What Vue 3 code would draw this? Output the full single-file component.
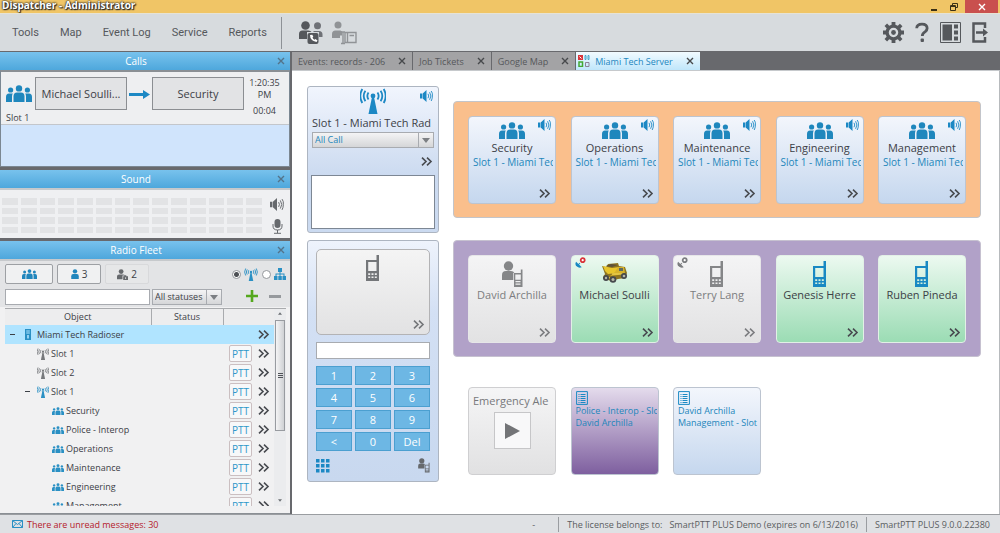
<script setup>
import { ref } from 'vue'

const menu = ['Tools', 'Map', 'Event Log', 'Service', 'Reports']
const tabs = ['Events: records - 206', 'Job Tickets', 'Google Map']
const status = ref('All statuses')
const callType = ref('All Call')
const view = ref('radio')
const search = ref('')
const number = ref('')
const message = ref('')

const tree = [
  { name: 'Miami Tech Radioser', icon: 'server', level: 0, open: true, selected: true },
  { name: 'Slot 1', icon: 'antenna', level: 1, off: true },
  { name: 'Slot 2', icon: 'antenna', level: 1, off: true },
  { name: 'Slot 1', icon: 'antenna', level: 1, open: true },
  { name: 'Security', icon: 'group', level: 2 },
  { name: 'Police - Interop', icon: 'group', level: 2 },
  { name: 'Operations', icon: 'group', level: 2 },
  { name: 'Maintenance', icon: 'group', level: 2 },
  { name: 'Engineering', icon: 'group', level: 2 },
  { name: 'Management', icon: 'group', level: 2 },
]
const groups = ['Security', 'Operations', 'Maintenance', 'Engineering', 'Management']
const radios = [
  { name: 'David Archilla', icon: 'person-radio', state: 'off' },
  { name: 'Michael Soulli', icon: 'truck', state: 'on', gps: 'lost' },
  { name: 'Terry Lang', icon: 'phone', state: 'off', gps: 'off' },
  { name: 'Genesis Herre', icon: 'phone', state: 'on' },
  { name: 'Ruben Pineda', icon: 'phone', state: 'on' },
]
const keys = ['1', '2', '3', '4', '5', '6', '7', '8', '9', '<', '0', 'Del']
</script>

<template>
  <div class="app">
    <svg class="sprite" aria-hidden="true">
      <symbol id="group" viewBox="0 0 26 17">
        <circle cx="13" cy="3.4" r="3.2" /><circle cx="4.6" cy="5" r="2.6" /><circle cx="21.4" cy="5" r="2.6" />
        <path d="M7.500 17v-5.500q0-4 3.500-4h4q3.500 0 3.500 4V17z" />
        <path d="M0 17v-5q0-3.500 3-3.500h3.800q-.8 1.200-.8 3V17zM26 17v-5q0-3.500-3-3.500h-3.800q.8 1.200.8 3V17z" />
      </symbol>
      <symbol id="person" viewBox="0 0 12 16">
        <circle cx="6" cy="3.700" r="3.500" /><path d="M0 16v-4.500Q0 8 3 8h6q3 0 3 3.500V16z" />
      </symbol>
      <symbol id="person-lock" viewBox="0 0 16 16">
        <circle cx="6" cy="3.700" r="3.500" /><path d="M0 15v-4Q0 8 3 8h6q2 0 2.500 1.500H8V15z" />
        <path d="M9 10.500h1.500V9h3v1.500H16V16H9zm3 1.500v2.500h1.200V12z" fill-rule="evenodd" />
      </symbol>
      <symbol id="antenna" viewBox="0 0 26 26">
        <circle cx="13" cy="8" r="2.400" /><path d="M11.800 10h2.400L17.500 26h-9z" />
        <path d="M8.500 4.500q-2.300 3.500 0 7M5.400 2.800q-3.400 5.200 0 10.400M2.300 1q-4 7 0 14M17.500 4.500q2.300 3.500 0 7M20.600 2.800q3.400 5.200 0 10.400M23.700 1q4 7 0 14" fill="none" stroke="currentColor" stroke-width="1.800" />
      </symbol>
      <symbol id="speaker" viewBox="0 0 13 12">
        <path d="M0 3.500h2.200v5H0zM2.700 3.500L6.500 0v12L2.700 8.500z" />
        <path d="M8 3.800q1.500 2.200 0 4.400M9.600 2.200q2.600 3.800 0 7.600M11.200 1q1.600 2 1.200 5-.1 3-1.200 5" fill="none" stroke="currentColor" stroke-width=".9" />
      </symbol>
      <symbol id="more" viewBox="0 0 12 9">
        <path d="M1 .7l4 3.800-4 3.800M6 .7l4 3.800-4 3.800" fill="none" stroke="currentColor" stroke-width="1.600" />
      </symbol>
      <symbol id="close" viewBox="0 0 8 8">
        <path d="M1 1l6 6M7 1L1 7" fill="none" stroke="currentColor" stroke-width="1.400" />
      </symbol>
      <symbol id="server" viewBox="0 0 6 11">
        <path d="M0 0h6v11H0zM1.200 1.500v1h3.600v-1zM1.200 3.600v1h3.600v-1zM2.200 6v3.500h1.600V6z" fill-rule="evenodd" />
      </symbol>
      <symbol id="phone" viewBox="0 0 14 27">
        <path d="M10.500 0H13v26H0V5h10.500zM2.200 7v9h8.300V7zM2.200 18.300v1.600h2v-1.600zm3.300 0v1.600h2v-1.600zm3.300 0v1.600h2v-1.600zM2.200 21.500v1.600h2v-1.600zm3.300 0v1.600h2v-1.600zm3.300 0v1.600h2v-1.600z" fill-rule="evenodd" />
      </symbol>
      <symbol id="person-radio" viewBox="0 0 21 27">
        <circle cx="6.500" cy="5" r="4.700" /><path d="M0 19v-5q0-4 4-4h5q2.500 0 3.300 2h-1v7z" />
        <path d="M18.800 8.500h1.700V26H12V12h6.800zM13.300 13.500v5.200h5.500v-5.200zM13.500 20v1.200h5V20zm0 2.500v1.200h5v-1.200z" fill-rule="evenodd" />
      </symbol>
      <symbol id="truck" viewBox="0 0 25 20">
        <path d="M0 3l4 1 2-3 10-1 1 3 6 1 2 6-2 5-7 1-7 2-8-3 2-4z" fill="#8e7420" />
        <path d="M1 3l9 2 7-1-2 6-9 1-3-3z" fill="#e8c52c" /><path d="M4 3l6 1 6-2-7-1z" fill="#5d523b" />
        <path d="M16 4h6l1 6-7 2-8 1 5-4z" fill="#d6b22a" /><path d="M17 5h4v3h-4z" fill="#5e6a62" />
        <path d="M1 13l7 2M10 11h12" stroke="#f0d75a" />
        <g fill="#45484b"><circle cx="4" cy="15" r="3" /><circle cx="11" cy="16.500" r="3.300" /><circle cx="22" cy="13" r="3" /></g>
        <g fill="#b7b7a7"><circle cx="4" cy="15" r="1.200" /><circle cx="11" cy="16.500" r="1.500" /><circle cx="22" cy="13" r="1.300" /></g>
      </symbol>
      <symbol id="dish" viewBox="0 0 10 10">
        <path d="M1.200 3Q-1 7 3 9q2 1 4.500.3L4.500 6.200 5.800 5 5 4.300 3.800 5.500z" />
      </symbol>
      <symbol id="list" viewBox="0 0 12 14">
        <path d="M.6.600h10.800v12.800H.6zM2.500 3.500h1M4.500 3.500h5M2.500 5.500h1M4.500 5.500h5M2.500 7.500h1M4.500 7.500h5M2.500 9.500h1M4.500 9.500h5M2.500 11.500h1M4.500 11.500h5" fill="none" stroke="currentColor" />
      </symbol>
    </svg>

    <header class="titlebar">
      <h1>Dispatcher - Administrator</h1>
      <div class="window-buttons">
        <button aria-label="Minimize"><svg viewBox="0 0 8 8"><path d="M1 6h6v2H1z" /></svg></button>
        <button aria-label="Restore"><svg viewBox="0 0 8 8"><path d="M2.500 2.500v-2h5v4h-2M.5 2.500h5v5h-5zM.5 3.500h5" fill="none" stroke="currentColor" /></svg></button>
        <button class="quit" aria-label="Close"><svg viewBox="0 0 8 8"><use href="#close" /></svg></button>
      </div>
    </header>

    <div class="toolbar">
      <nav>
        <button v-for="item in menu" :key="item">{{ item }}</button>
      </nav>
      <div class="quick">
        <button aria-label="Group call">
          <svg width="24" height="24" viewBox="0 0 24 24">
            <circle cx="6.500" cy="4.500" r="4.300" /><path d="M0 18v-5q0-3.500 3.500-3.500h6q2 0 3 1.500H8v7z" />
            <circle cx="18.500" cy="4.700" r="3.500" opacity=".8" /><path d="M15 10h5q3.500 0 3.500 3.500V16H20v-5h-6z" opacity=".8" />
            <rect x="8.500" y="12" width="11" height="11" rx="2" />
            <path d="M11 14q0 5.500 6.500 7l1-1.600-2-1.400-1 .8q-1.700-1-2-2.300l.8-.8-1-2z" fill="#fff" />
          </svg>
        </button>
        <button class="faded" aria-label="Log entry">
          <svg width="25" height="24" viewBox="0 0 25 24">
            <circle cx="6" cy="4" r="3.500" /><path d="M0 17v-4q0-3.500 3.500-3.500h5l1.500 1v4H8V17z" />
            <path d="M9 11h4M11 11v11M9 22.500h4M13 11.500h11v10H13zM15.500 11.500v10M17.500 14.500h4.500" fill="none" stroke="currentColor" stroke-width="1.400" />
          </svg>
        </button>
      </div>
      <div class="system">
        <button aria-label="Settings">
          <svg width="21" height="21" viewBox="0 0 22 22">
            <path d="M9 0h4v3l2.500 1 2.200-2.200 2.700 2.700L18.200 6.700l1 2.300H22v4h-2.800l-1 2.500 2.200 2.200-2.700 2.700-2.200-2.200-2.500 1V22H9v-2.800l-2.500-1-2.200 2.200-2.700-2.700 2.200-2.200-1-2.500H0V9h2.800l1-2.500L1.600 4.300l2.700-2.700 2.200 2.200L9 2.800zM11 6a5 5 0 100 10 5 5 0 000-10z" fill-rule="evenodd" /><circle cx="11" cy="11" r="2.500" />
          </svg>
        </button>
        <button aria-label="Help">
          <svg width="14" height="21" viewBox="0 0 15 21">
            <path d="M1.800 6Q2 1.500 7.500 1.500T13 6q0 2-2 3.500-3.200 2-3.200 4.800" fill="none" stroke="currentColor" stroke-width="3" /><rect x="6" y="17" width="3.600" height="3.600" rx="1" />
          </svg>
        </button>
        <button aria-label="Layout">
          <svg width="21" height="21" viewBox="0 0 21 21">
            <path d="M.5.500h20v20H.5z" fill="none" stroke="currentColor" /><path d="M2.500 2.500h9.500v16H2.500zM14 2.500h4v4h-4zM14 8.500h4v4h-4zM14 14.500h4v4h-4z" />
          </svg>
        </button>
        <button aria-label="Log out">
          <svg width="16" height="21" viewBox="0 0 16 21">
            <path d="M13 6V1.500H1.500v18H13V15M4 10.500h9" fill="none" stroke="currentColor" stroke-width="2.500" /><path d="M11 6.500l5 4-5 4z" />
          </svg>
        </button>
      </div>
    </div>

    <div class="body">
      <aside>
        <section class="panel calls">
          <h2>Calls<button aria-label="Close Calls"><svg><use href="#close" /></svg></button></h2>
          <div class="calls-body">
            <div class="call">
              <div class="slot"><svg class="group-icon"><use href="#group" /></svg><span>Slot 1</span></div>
              <button class="party">Michael Soulli...</button>
              <svg class="arrow" viewBox="0 0 21 9"><path d="M0 3h14V0l7 4.500L14 9V6H0z" /></svg>
              <button class="party">Security</button>
              <div class="time"><span>1:20:35 PM</span><span>00:04</span></div>
            </div>
          </div>
        </section>

        <section class="panel">
          <h2>Sound<button aria-label="Close Sound"><svg><use href="#close" /></svg></button></h2>
          <div class="sound">
            <div class="meter"><i v-for="n in 56" :key="n"></i></div>
            <div class="audio">
              <svg width="14" height="13"><use href="#speaker" /></svg>
              <svg width="11" height="15" viewBox="0 0 11 15"><rect x="2.500" width="6" height="9" rx="3" /><path d="M1 5v2q0 4 4.500 4T10 7V5M5.500 11v3M2 14.300h7" fill="none" stroke="currentColor" /></svg>
            </div>
          </div>
        </section>

        <section class="panel fleet">
          <h2>Radio Fleet<button aria-label="Close Radio Fleet"><svg><use href="#close" /></svg></button></h2>
          <div class="fleet-body">
            <div class="filters">
              <button class="filter" aria-label="Groups"><svg width="15" height="10"><use href="#group" /></svg></button>
              <button class="filter"><svg width="8" height="10"><use href="#person" /></svg>3</button>
              <button class="filter muted"><svg width="11" height="11"><use href="#person-lock" /></svg>2</button>
              <div class="views">
                <label><input v-model="view" type="radio" name="view" value="radio" aria-label="Radio view"><svg width="14" height="13"><use href="#antenna" /></svg></label>
                <label><input v-model="view" type="radio" name="view" value="tree" aria-label="Tree view"><svg width="12" height="12" viewBox="0 0 12 12"><path d="M4 0h4v4H4zM0 8h3.500v4H0zM4.300 8h3.500v4H4.300zM8.500 8H12v4H8.500zM5.500 4h1v4h-1zM1.500 5.500h9V8h-1V6.500h-7V8h-1z" /></svg></label>
              </div>
            </div>
            <div class="filters second">
              <input v-model="search" class="search" type="text" aria-label="Search objects">
              <span class="select statuses">
                <select v-model="status" aria-label="Status filter"><option>All statuses</option></select>
                <svg viewBox="0 0 8 5"><path d="M0 0h8L4 5z" /></svg>
              </span>
              <div class="edit">
                <button class="add" aria-label="Add"><svg viewBox="0 0 12 12"><path d="M4.700 0h2.600v4.700H12v2.600H7.300V12H4.700V7.300H0V4.700h4.700z" /></svg></button>
                <button aria-label="Remove"><svg viewBox="0 0 12 12"><path d="M0 5h12v3H0z" /></svg></button>
              </div>
            </div>
            <div class="tree">
              <div class="tree-view">
                <table>
                  <thead><tr><th>Object</th><th>Status</th><th></th></tr></thead>
                  <tbody>
                    <tr v-for="(row, i) in tree" :key="i" :class="{ selected: row.selected }">
                      <td colspan="2">
                        <div class="node" :class="['level' + row.level, row.icon, { off: row.off }]">
                          <button v-if="row.open" class="toggle" :aria-label="'Toggle ' + row.name"></button>
                          <svg><use :href="'#' + row.icon" /></svg>{{ row.name }}
                        </div>
                      </td>
                      <td>
                        <div class="actions">
                          <button v-if="!row.selected" class="ptt">PTT</button>
                          <button class="row-more" :aria-label="'More for ' + row.name"><svg width="12" height="9"><use href="#more" /></svg></button>
                        </div>
                      </td>
                    </tr>
                  </tbody>
                </table>
              </div>
              <div class="scrollbar" aria-hidden="true">
                <svg viewBox="0 0 6 4"><path d="M0 4l3-4 3 4z" /></svg>
                <div class="thumb"><i></i><i></i><i></i></div>
                <svg viewBox="0 0 6 4"><path d="M0 0l3 4 3-4z" /></svg>
              </div>
            </div>
          </div>
        </section>
      </aside>

      <main>
        <div class="tabs" role="tablist">
          <button v-for="tab in tabs" :key="tab" class="tab" role="tab">{{ tab }}<svg><use href="#close" /></svg></button>
          <button class="tab active" role="tab" aria-selected="true">
            <svg class="mosaic" viewBox="0 0 12 12"><path d="M0 0h5v5H0z" fill="#d9343a" /><path d="M1.500 1.500l2 2" stroke="#fff" /><path d="M7 .500h1v4H7zM10 .500h1v4h-1z" fill="none" stroke="#48a5c8" /><path d="M1 7h3.500v4.500H1z" fill="none" stroke="#43a832" stroke-width="1.500" /><path d="M7.500 7.500h3.500v4H7.500z" fill="none" stroke="#8d8096" /></svg>
            Miami Tech Server<svg><use href="#close" /></svg>
          </button>
        </div>

        <div class="console">
          <div class="controls">
            <section class="card slot-card">
              <svg class="mast"><use href="#antenna" /></svg>
              <svg class="speaker"><use href="#speaker" /></svg>
              <h3>Slot 1 - Miami Tech Rad</h3>
              <span class="select call-type">
                <select v-model="callType" aria-label="Call type"><option>All Call</option></select>
                <svg viewBox="0 0 8 5"><path d="M0 0h8L4 5z" /></svg>
              </span>
              <button class="card-more" aria-label="More"><svg width="12" height="9"><use href="#more" /></svg></button>
              <textarea v-model="message" aria-label="Message"></textarea>
            </section>
            <section class="card dialer">
              <div class="handset">
                <svg width="14" height="27"><use href="#phone" /></svg>
                <button class="tile-more" aria-label="More"><svg width="12" height="9"><use href="#more" /></svg></button>
              </div>
              <input v-model="number" type="text" aria-label="Number">
              <div class="keys"><button v-for="key in keys" :key="key">{{ key }}</button></div>
              <div class="dialer-foot">
                <svg class="dots" width="14" height="14" viewBox="0 0 14 14"><path d="M0 0h3.500v3.500H0zM5 0h3.500v3.500H5zM10 0h3.500v3.500H10zM0 5h3.500v3.500H0zM5 5h3.500v3.500H5zM10 5h3.500v3.500H10zM0 10h3.500v3.500H0zM5 10h3.500v3.500H5zM10 10h3.500v3.500H10z" /></svg>
                <svg width="12" height="15"><use href="#person-radio" /></svg>
              </div>
            </section>
          </div>

          <div class="boards">
            <section class="board orange">
              <article v-for="name in groups" :key="name" class="tile group-tile">
                <svg class="group-icon"><use href="#group" /></svg>
                <svg class="speaker"><use href="#speaker" /></svg>
                <h3>{{ name }}</h3>
                <p>Slot 1 - Miami Tech</p>
                <button class="tile-more" :aria-label="'More for ' + name"><svg width="12" height="9"><use href="#more" /></svg></button>
              </article>
            </section>
            <section class="board purple">
              <article v-for="radio in radios" :key="radio.name" class="tile radio" :class="radio.state">
                <svg class="device" :class="radio.icon"><use :href="'#' + radio.icon" /></svg>
                <svg v-if="radio.gps" class="gps" :class="radio.gps" viewBox="0 0 11 11"><use href="#dish" y="2" width="9" height="9" /><circle cx="7.700" cy="3.200" r="2" /></svg>
                <h3>{{ radio.name }}</h3>
                <button class="tile-more" :aria-label="'More for ' + radio.name"><svg width="12" height="9"><use href="#more" /></svg></button>
              </article>
            </section>
            <section class="board plain">
              <article class="tile alert">
                <h3>Emergency Ale</h3>
                <button class="play" aria-label="Play"><svg viewBox="0 0 15 16"><path d="M0 0l15 8L0 16z" /></svg></button>
              </article>
              <article class="tile list violet">
                <svg width="12" height="14"><use href="#list" /></svg>
                <p>Police - Interop - Slc</p><p>David Archilla</p>
              </article>
              <article class="tile list">
                <svg width="12" height="14"><use href="#list" /></svg>
                <p>David Archilla</p><p>Management - Slot</p>
              </article>
            </section>
          </div>
        </div>
      </main>
    </div>

    <footer>
      <svg width="11" height="8" viewBox="0 0 11 8"><path d="M.5.500h10v7H.5zM.5.500l5 4 5-4M.5 7.500L4 3.500M10.500 7.500L7 3.500" fill="none" stroke="currentColor" /></svg>
      <span class="unread">There are unread messages: 30</span>
      <span class="dash">-</span>
      <span class="cell">The license belongs to:<span>SmartPTT PLUS Demo (expires on 6/13/2016)</span></span>
      <span class="cell">SmartPTT PLUS 9.0.0.22380</span>
    </footer>
  </div>
</template>

<style>
body { margin: 0; }
</style>

<style scoped>
* { box-sizing: border-box; }
.app { display: flex; flex-direction: column; height: 100vh; overflow: hidden; font-family: "Open Sans", "Noto Sans", sans-serif; font-size: 9px; color: #3c4046; background: #d7dbde; }
.sprite { position: absolute; width: 0; height: 0; }
svg { fill: currentColor; flex: none; display: block; }
button { font: inherit; color: inherit; padding: 0; border: 0; background: none; display: flex; align-items: center; justify-content: center; flex: none; }
h1, h2, h3, p { margin: 0; font-weight: normal; }
input, select, textarea { font: inherit; color: inherit; margin: 0; padding: 0 2px; border: 1px solid #a8abb0; border-radius: 0; background: #fff; }

.titlebar { display: flex; justify-content: space-between; height: 13px; background: #f0c566; flex: none; }
.titlebar h1 { padding-left: 2px; font: bold 10px/11px "Open Sans", sans-serif; color: #fff; text-shadow: 0 0 2px #222, 1px 1px 1px #222, 0 0 2px #222; }
.window-buttons { display: flex; padding-right: 2px; color: #3b3015; }
.window-buttons button { width: 20px; }
.window-buttons svg { width: 8px; height: 8px; }
.window-buttons .quit { width: 33px; margin-left: 1px; color: #fff; background: #c9504e; }

.toolbar { display: flex; align-items: center; height: 38px; flex: none; color: #55585c; border-top: 1px solid #e6e3d5; }
nav { display: flex; gap: 21px; padding: 0 14px 0 12px; height: 32px; border-right: 1px solid #8d9196; font: 11px/13px Roboto, "Liberation Sans", sans-serif; }
.quick { display: flex; gap: 9px; padding-left: 17px; }
.faded { color: #909396; }
.system { display: flex; gap: 11px; margin-left: auto; padding-right: 12px; }

.body { display: flex; flex: 1; min-height: 0; background: #68696d; padding-top: 1px; }
aside { display: flex; flex-direction: column; gap: 3px; width: 292px; padding-right: 2px; flex: none; }
.panel { background: #eff0f2; flex: none; }
.panel h2 { position: relative; height: 18px; font-size: 10px; line-height: 18px; text-align: center; color: #fff; padding-right: 18px; background: linear-gradient(#78c2ed, #4ea7dc); }
.panel h2 button { position: absolute; right: 5px; top: 5px; color: #53738a; }
.panel h2 svg { width: 8px; height: 8px; }
.calls-body { height: 97px; border: 1px solid #7b8792; border-top: 2px solid #8a8f94; background: #d0e4fc; }
.call { display: flex; align-items: flex-start; height: 53px; padding: 5px 4px 0 5px; background: #eeeff1; border-bottom: 1px solid #c3c6cb; }
.slot { width: 29px; padding-top: 8px; color: #1f87bd; }
.group-icon { width: 26px; height: 17px; }
.slot span { display: block; margin-top: 10px; line-height: 12px; color: #3c4046; }
.party { width: 92px; height: 33px; border: 1px solid #8b8e92; background: #e2e3e5; font-size: 11px; }
.arrow { width: 21px; height: 9px; margin: 13px 2px; color: #1c88c4; }
.time { flex: 1; display: flex; flex-direction: column; gap: 4px; line-height: 12px; text-align: center; padding: 0 4px; }

.sound { display: flex; gap: 8px; height: 50px; padding: 8px 6px 4px 2px; border-top: 2px solid #c6c9cc; }
.meter { display: grid; grid-template-columns: repeat(14, 1fr); gap: 3px; flex: 1; padding-bottom: 1px; }
.meter i { background: #e2e3e5; }
.audio { display: flex; flex-direction: column; justify-content: space-between; align-items: center; color: #66696d; }

.fleet { flex: 1; min-height: 0; display: flex; flex-direction: column; border-bottom: 1px solid #8a8f94; }
.fleet-body { flex: 1; min-height: 0; display: flex; flex-direction: column; padding: 3px 4px 7px 5px; border-top: 2px solid #c6c9cc; background: linear-gradient(#e3e4e6 0 46px, #f1f1f2 46px); }
.filters { display: flex; align-items: center; height: 20px; margin-bottom: 3px; flex: none; gap: 4px; }
.filters.second { margin-bottom: 1px; }
.filter { width: 48px; height: 20px; gap: 3px; border: 1px solid #9da0a4; border-radius: 2px; background: #f0f1f2; font-size: 10px; }
.filter + .filter { width: 44px; }
.filter svg { color: #2086bd; }
.filter.muted { border-color: #d8d9db; background: #e6e7e8; }
.filter.muted svg { color: #66696d; }
.views { display: flex; gap: 4px; margin-left: auto; color: #2a90c4; }
.views label { display: flex; align-items: center; gap: 3px; }
.views input { appearance: none; width: 9px; height: 9px; padding: 0; border: 1px solid #94979b; border-radius: 50%; }
.views input:checked { background: radial-gradient(circle, #4d5055 0 2px, #fff 3px); }
.search { width: 145px; height: 16px; }
.select { position: relative; display: block; }
.select select { appearance: none; display: block; width: 100%; height: 16px; line-height: 14px; background: linear-gradient(to left, transparent 14px, #a8abb0 14px 15px, transparent 15px), linear-gradient(#f4f4f5, #d5d6d8); }
.select svg { position: absolute; right: 4px; top: 6px; width: 8px; height: 5px; color: #7c7f83; pointer-events: none; }
.statuses { width: 70px; margin-left: -2px; }
.edit { display: flex; gap: 11px; margin-left: auto; padding: 0 5px 3px 0; color: #96999d; }
.edit svg { width: 12px; height: 12px; }
.edit .add { color: #55a81e; }
.tree { display: flex; flex: 1; min-height: 0; border-top: 1px solid #a9abae; }
.tree-view { flex: 1; overflow: hidden; }
table { width: 100%; border-collapse: collapse; table-layout: fixed; }
th { height: 16px; padding: 0; font-weight: normal; line-height: 14px; background: #ededee; border-right: 1px solid #a9abae; }
th:first-child { width: 146px; }
th:nth-child(2) { width: 72px; }
th:last-child { border-right: 0; }
td { height: 19px; padding: 0; }
.selected { background: #b0e4ff; }
.node { position: relative; display: flex; align-items: center; gap: 2px; height: 19px; white-space: nowrap; }
.node svg { color: #2a90c4; width: 12px; height: 12px; }
.node.off svg { color: #77797c; }
.node.group svg { height: 8px; }
.node.server { gap: 6px; }
.node.server svg { width: 6px; height: 11px; }
.level0 { padding-left: 20px; }
.level1 { padding-left: 32px; }
.level2 { padding-left: 47px; }
.toggle { position: absolute; left: 5px; width: 5px; height: 1px; background: #3c4046; }
.level1 .toggle { left: 20px; }
.actions { display: flex; justify-content: flex-end; align-items: center; gap: 6px; height: 19px; padding-right: 4px; }
.ptt { width: 23px; height: 17px; border: 1px solid #cbbfc1; border-radius: 2px; background: #f7f8f9; color: #2f97c9; font-size: 10px; line-height: 14px; }
.scrollbar { display: flex; flex-direction: column; align-items: center; gap: 5px; width: 12px; padding: 3px 0 4px; background: #ebecee; }
.scrollbar svg { width: 4px; height: 3px; color: #6d7074; }
.scrollbar svg:last-child { margin-top: auto; }
.thumb { display: flex; flex-direction: column; justify-content: center; align-items: center; gap: 1px; width: 10px; height: 111px; border: 1px solid #989ba0; background: linear-gradient(to right, #f4f4f5, #cfd1d4); }
.thumb i { width: 5px; height: 1px; background: #505358; }

main { flex: 1; min-width: 0; display: flex; flex-direction: column; }
.tabs { display: flex; height: 18px; flex: none; gap: 1px; }
.tab { gap: 13px; padding: 0 6px; color: #55575a; background: #a3a3a5; white-space: nowrap; }
.tab svg { width: 8px; height: 8px; color: #47494c; }
.tab.active { color: #1d87c0; background: linear-gradient(#f2fbff, #bfe6fb); padding-left: 2px; }
.tab .mosaic { width: 12px; height: 12px; margin-right: -8px; }
.console { display: flex; flex: 1; min-height: 0; gap: 14px; padding: 15px 18px 0 15px; background: #fff; border-top: 1px solid #c6c9cc; border-right: 1px solid #b7babd; }
.controls { display: flex; flex-direction: column; gap: 7px; width: 132px; flex: none; }
.card { position: relative; display: flex; flex-direction: column; border: 1px solid #adb5c1; border-radius: 3px; background: linear-gradient(#f1f5fd, #c8d8ef); }
.slot-card { height: 147px; padding: 1px 3px 3px; background: linear-gradient(#f1f5fd, #cbdaf0 90px); }
.mast { width: 26px; height: 26px; color: #1c88c4; align-self: center; }
.speaker { position: absolute; right: 5px; top: 3px; width: 13px; height: 12px; color: #1c88c4; }
.slot-card h3 { margin: 1px 1px 0; font-size: 11px; line-height: 16px; white-space: nowrap; }
.call-type { margin: 1px 1px 0; color: #2386bb; }
.card-more { align-self: flex-end; padding: 9px 2px 9px 0; }
textarea { flex: 1; resize: none; min-height: 0; border: 1px solid #7d8794; }
.dialer { height: 242px; padding: 8px; gap: 7px; background: linear-gradient(#eef3fc, #d3e0f4 30%, #c8d8ef); }
.handset { position: relative; height: 88px; padding-top: 5px; display: flex; justify-content: center; border: 1px solid #b3b3b5; border-radius: 5px; background: linear-gradient(#f4f4f4, #e2e2e3); color: #747679; }
.dialer input { width: 100%; height: 17px; }
.keys { display: grid; grid-template-columns: repeat(3, 1fr); gap: 3px; }
.keys button { height: 19px; border: 1px solid #4b9fd0; background: #6db7e4; color: #fff; font-size: 11px; }
.dialer-foot { display: flex; justify-content: space-between; align-items: center; color: #66696d; }
.dots { color: #1c88c4; }
.boards { flex: 1; min-width: 0; padding-top: 15px; display: flex; flex-direction: column; gap: 22px; }
.board { display: grid; grid-template-columns: repeat(5, 88px); justify-content: space-between; padding: 14px 14px 13px; border: 1px solid #c3c5ca; border-radius: 4px; }
.orange { background: #fabf8c; }
.purple { background: #b1a1c8; border: 1px solid #c6c1d0; }
.plain { margin-top: 8px; border: 0; padding: 0 15px; }
.tile { position: relative; display: flex; flex-direction: column; align-items: center; width: 88px; height: 88px; padding: 5px 1px 5px 4px; overflow: hidden; border: 1px solid #bcc4d0; border-radius: 4px; background: linear-gradient(#f3f6fc, #c5d7ee); white-space: nowrap; }
.group-tile { padding: 5px 2px; }
.group-tile p { padding-left: 2px; }
.tile .group-icon { color: #1f87bd; }
.tile h3 { font-size: 11px; line-height: 17px; }
.tile p { width: 100%; font-size: 10px; line-height: 12px; overflow: hidden; color: #2386bb; }
.tile .speaker { top: 2px; right: 4px; }
.tile-more { position: absolute; right: 4px; bottom: 5px; }
.tile:not(.off) .tile-more, .card-more, .row-more { color: #484b50; }
.radio { padding: 5px 1px; }
.radio .device { width: 14px; height: 27px; color: #1989c3; }
.radio .person-radio { width: 21px; }
.radio .truck { width: 25px; height: 20px; margin: 2px 0 5px; }
.radio.on { border-color: #e2f0e6; background: linear-gradient(#ecf9f0, #9bdcb4); }
.radio.off { border-color: #e6e6e8; background: linear-gradient(#f4f4f5, #e2e2e3); color: #7c7d80; }
.radio.off .device { color: #858688; }
.radio h3 { margin-top: -2px; }
.gps { position: absolute; left: 3px; top: 1px; width: 11px; height: 11px; color: #1989c3; }
.gps circle { fill: #fff; stroke: #d9343a; stroke-width: 1.8; }
.gps.off { color: #7c7d80; }
.gps.off circle { stroke: #7c7d80; }
.alert { padding: 4px 4px; background: linear-gradient(#f5f5f6, #e1e1e2); border-color: #cfcfd1; color: #77787b; align-items: flex-start; }
.play { align-self: center; width: 37px; height: 37px; margin-top: 3px; border: 1px solid #c6c6c8; background: #f8f8f9; color: #737477; }
.play svg { width: 15px; height: 16px; }
.list { align-items: flex-start; padding-top: 3px; }
.list svg { color: #1989c3; }
.tile.list p { font-size: 9px; }
.violet { background: linear-gradient(#e4dbec, #7e5f9f); }

footer { display: flex; align-items: center; height: 19px; flex: none; padding: 0 10px 0 12px; color: #5a5d61; background: #dfe1e4; border-top: 1px solid #9a9da1; white-space: nowrap; }
footer > svg { color: #2a90c4; }
.unread { margin-left: 4px; color: #b5202a; }
.dash { margin: 0 15px 0 auto; }
.cell { padding-left: 8px; margin-left: 8px; border-left: 1px solid #9a9da1; line-height: 15px; }
.cell span { margin-left: 7px; }
</style>
